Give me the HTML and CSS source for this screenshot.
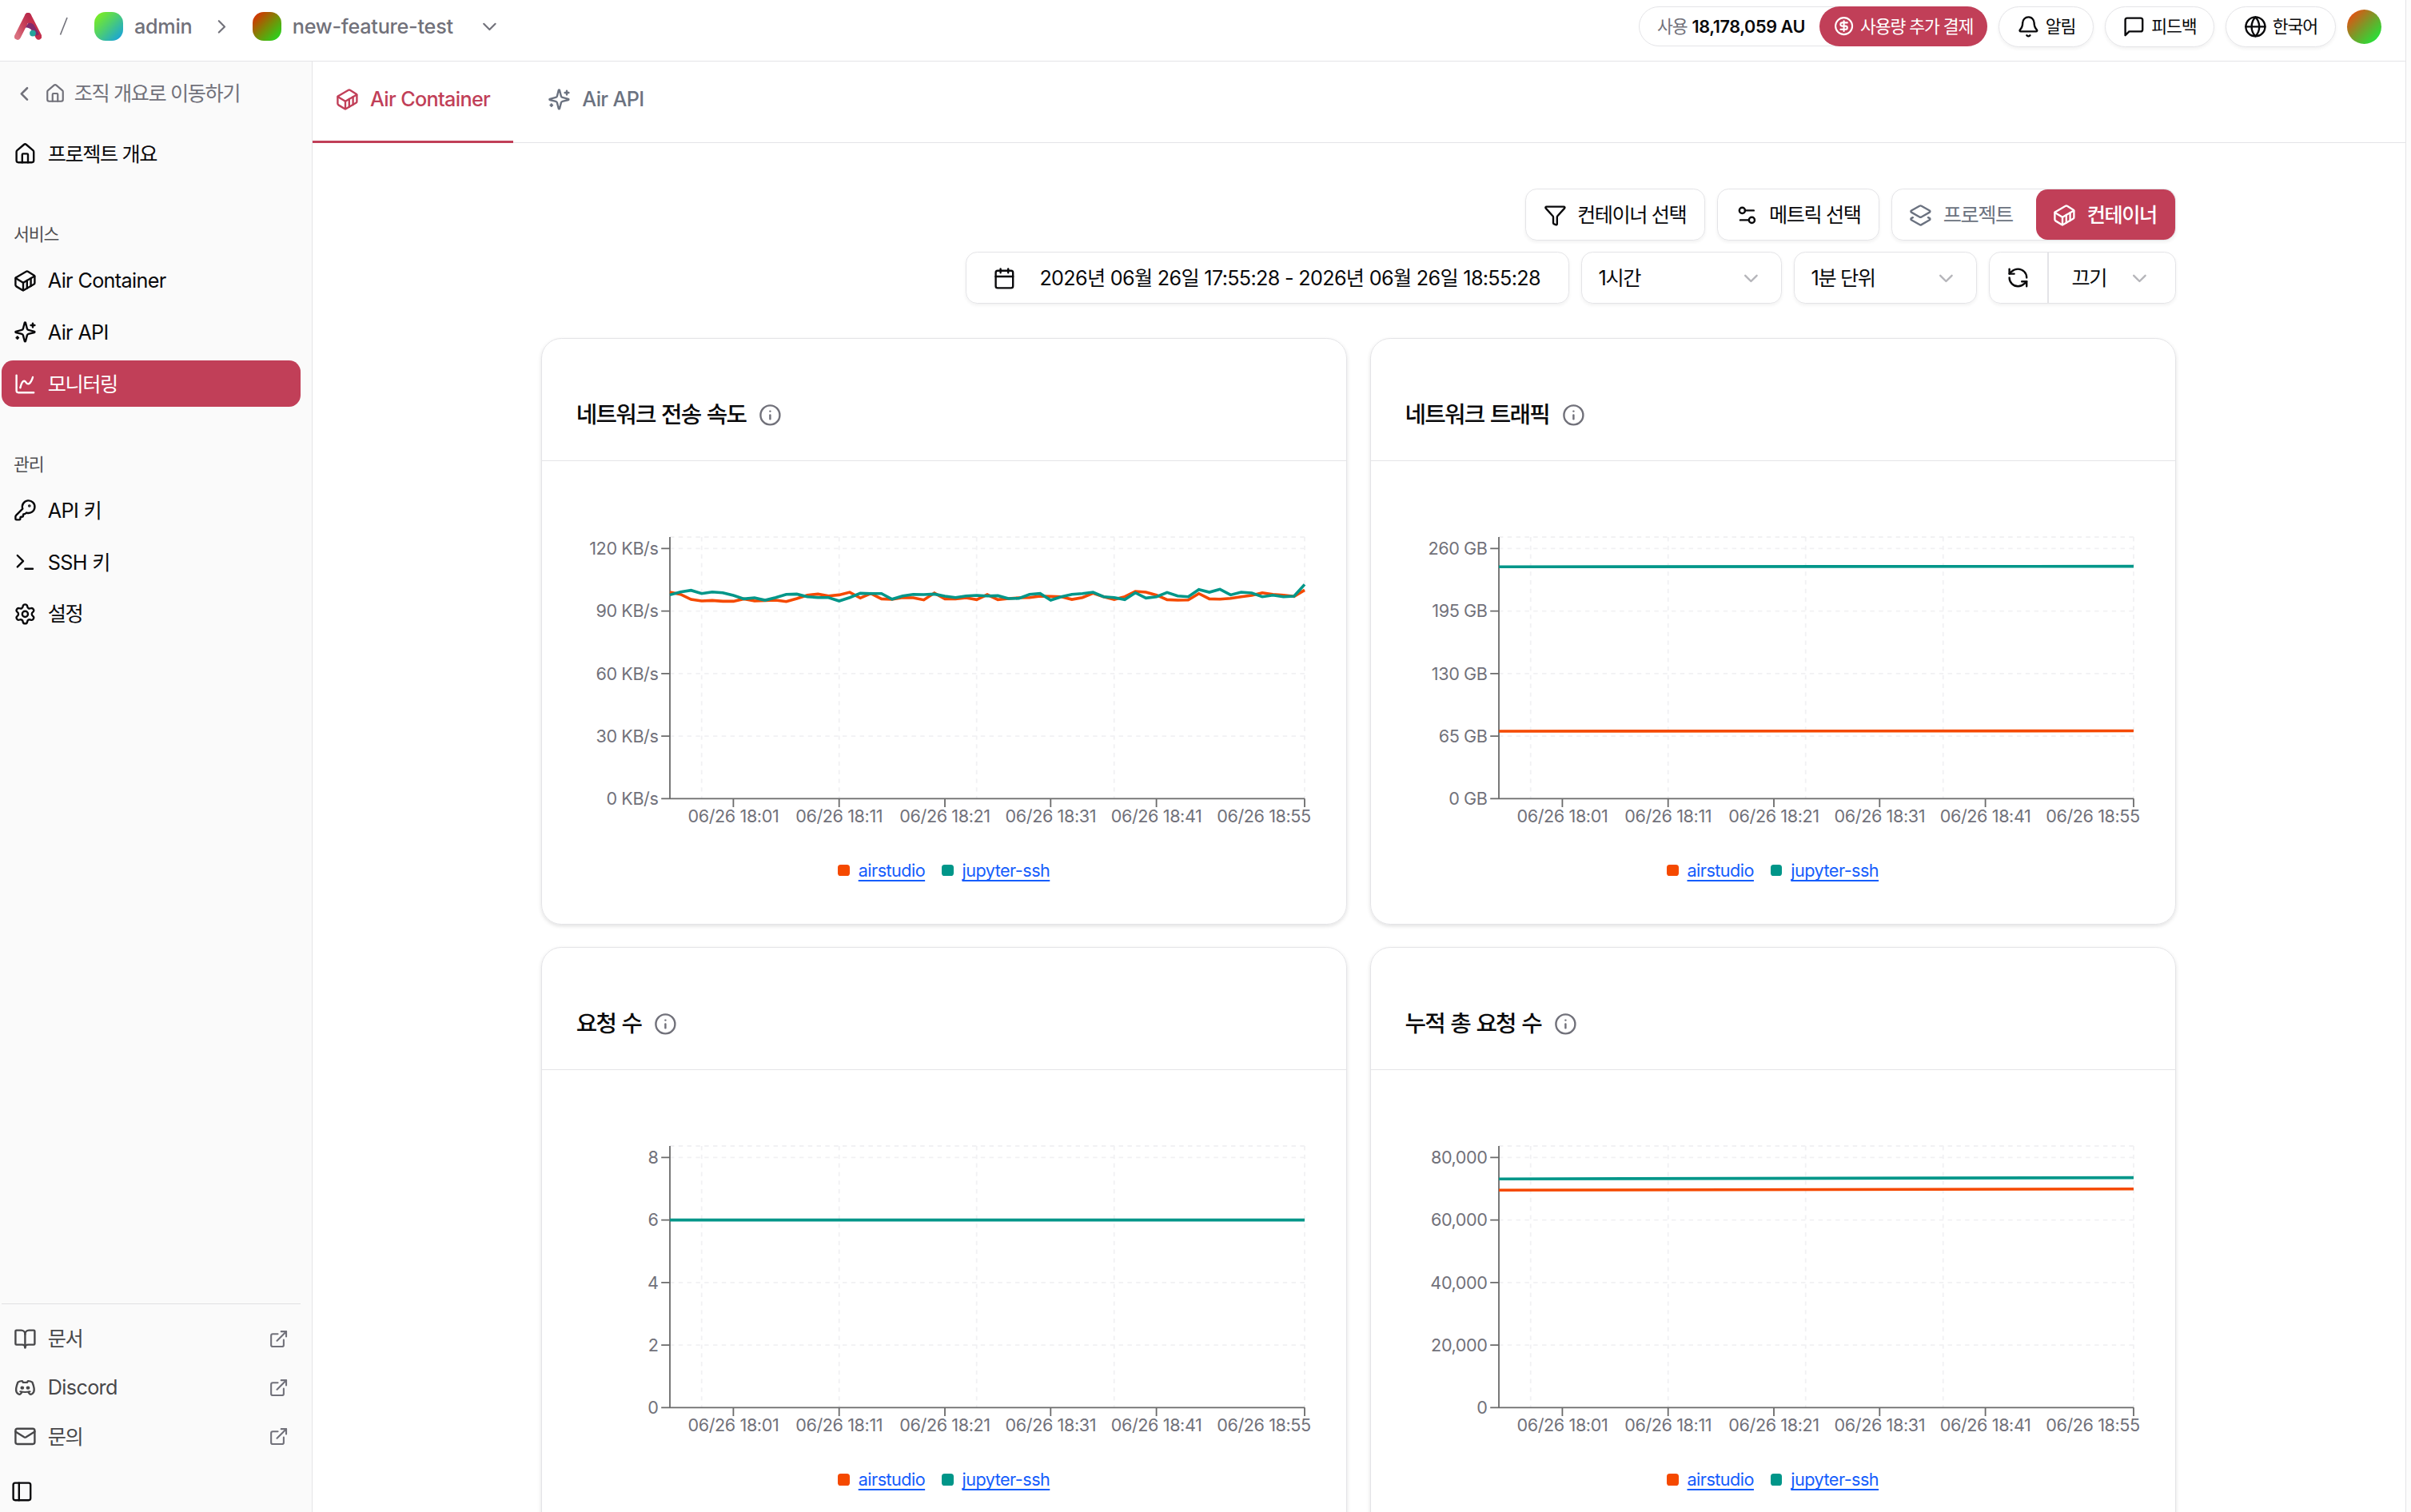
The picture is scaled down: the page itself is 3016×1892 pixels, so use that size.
FILE: index.html
```html
<!DOCTYPE html>
<html lang="ko">
<head>
<meta charset="utf-8">
<title>모니터링</title>
<link rel="stylesheet" href="styles.css">
</head>
<body>
<svg class="sprite" aria-hidden="true">
  <symbol id="home" viewBox="0 0 24 24"><path d="M15 21v-8a1 1 0 0 0-1-1h-4a1 1 0 0 0-1 1v8"/><path d="M3 10a2 2 0 0 1 .709-1.528l7-5.999a2 2 0 0 1 2.582 0l7 5.999A2 2 0 0 1 21 10v9a2 2 0 0 1-2 2H5a2 2 0 0 1-2-2z"/></symbol>
  <symbol id="container" viewBox="0 0 24 24"><path d="M22 7.7c0-.6-.4-1.2-.8-1.5l-6.3-3.9a1.72 1.72 0 0 0-1.7 0l-10.3 6c-.5.2-.9.8-.9 1.4v6.6c0 .5.4 1.2.8 1.5l6.3 3.9a1.72 1.72 0 0 0 1.7 0l10.3-6c.5-.3.9-1 .9-1.5Z"/><path d="M10 21.9V14L2.1 9.1"/><path d="m10 14 11.9-6.9"/><path d="M14 19.8v-8.1"/><path d="M18 17.5V9.4"/></symbol>
  <symbol id="sparkles" viewBox="0 0 24 24"><path d="M9.937 15.5A2 2 0 0 0 8.5 14.063l-6.135-1.582a.5.5 0 0 1 0-.962L8.5 9.936A2 2 0 0 0 9.937 8.5l1.582-6.135a.5.5 0 0 1 .963 0L14.063 8.5A2 2 0 0 0 15.5 9.937l6.135 1.581a.5.5 0 0 1 0 .964L15.5 14.063a2 2 0 0 0-1.437 1.437l-1.582 6.135a.5.5 0 0 1-.963 0z"/><path d="M20 3v4M22 5h-4M4 17v2M5 18H3"/></symbol>
  <symbol id="spline" viewBox="0 0 24 24"><path d="M3 3v16a2 2 0 0 0 2 2h16"/><path d="M7 16c.5-2 1.5-7 4-7 2 0 2 3 4 3 2.5 0 4.5-5 5-7"/></symbol>
  <symbol id="key" viewBox="0 0 24 24"><path d="M2.586 17.414A2 2 0 0 0 2 18.828V21a1 1 0 0 0 1 1h3a1 1 0 0 0 1-1v-1a1 1 0 0 1 1-1h1a1 1 0 0 0 1-1v-1a1 1 0 0 1 1-1h.172a2 2 0 0 0 1.414-.586l.814-.814a6.5 6.5 0 1 0-4-4z"/><circle cx="16.5" cy="7.5" r=".5" fill="currentColor"/></symbol>
  <symbol id="terminal" viewBox="0 0 24 24"><path d="m4 17 6-6-6-6"/><path d="M12 19h8"/></symbol>
  <symbol id="gear" viewBox="0 0 24 24"><path d="M9.671 4.136a2.34 2.34 0 0 1 4.659 0 2.34 2.34 0 0 0 3.319 1.915 2.34 2.34 0 0 1 2.33 4.033 2.34 2.34 0 0 0 0 3.831 2.34 2.34 0 0 1-2.33 4.033 2.34 2.34 0 0 0-3.319 1.915 2.34 2.34 0 0 1-4.659 0 2.34 2.34 0 0 0-3.32-1.915 2.34 2.34 0 0 1-2.33-4.033 2.34 2.34 0 0 0 0-3.831A2.34 2.34 0 0 1 6.35 6.051a2.34 2.34 0 0 0 3.319-1.915"/><circle cx="12" cy="12" r="3"/></symbol>
  <symbol id="book" viewBox="0 0 24 24"><path d="M12 7v14"/><path d="M3 18a1 1 0 0 1-1-1V4a1 1 0 0 1 1-1h5a4 4 0 0 1 4 4 4 4 0 0 1 4-4h5a1 1 0 0 1 1 1v13a1 1 0 0 1-1 1h-6a3 3 0 0 0-3 3 3 3 0 0 0-3-3z"/></symbol>
  <symbol id="discord" viewBox="0 0 24 24"><g transform="translate(0 1.5) scale(1 .88)"><circle cx="9" cy="12.2" r="1"/><circle cx="15" cy="12.2" r="1"/><path d="M15.5 17c0 1 1.5 3 2 3c1.5 0 2.833-1.667 3.5-3c.667-1.667.5-5.833-1.5-11.5c-1.457-1.015-3-1.34-4.5-1.5l-.972 1.923a11.913 11.913 0 0 0-4.053 0l-.975-1.923c-1.5.16-3.043.485-4.5 1.5c-2 5.667-2.167 9.833-1.5 11.5c.667 1.333 2 3 3.5 3c.5 0 2-2 2-3"/><path d="M7 16.5c3.5 1 6.5 1 10 0"/></g></symbol>
  <symbol id="mail" viewBox="0 0 24 24"><rect x="2" y="4" width="20" height="16" rx="2"/><path d="m22 7-8.991 5.727a2 2 0 0 1-2.009 0L2 7"/></symbol>
  <symbol id="external" viewBox="0 0 24 24"><path d="M15 3h6v6"/><path d="M10 14 21 3"/><path d="M18 13v6a2 2 0 0 1-2 2H5a2 2 0 0 1-2-2V8a2 2 0 0 1 2-2h6"/></symbol>
  <symbol id="panel" viewBox="0 0 24 24"><rect x="3" y="3" width="18" height="18" rx="2"/><path d="M9 3v18"/></symbol>
  <symbol id="bell" viewBox="0 0 24 24"><path d="M10.268 21a2 2 0 0 0 3.464 0"/><path d="M3.262 15.326A1 1 0 0 0 4 17h16a1 1 0 0 0 .74-1.673C19.41 13.956 18 12.499 18 8A6 6 0 0 0 6 8c0 4.499-1.411 5.956-2.738 7.326"/></symbol>
  <symbol id="message" viewBox="0 0 24 24"><path d="M21 15a2 2 0 0 1-2 2H7l-4 4V5a2 2 0 0 1 2-2h14a2 2 0 0 1 2 2z"/></symbol>
  <symbol id="globe" viewBox="0 0 24 24"><circle cx="12" cy="12" r="10"/><path d="M12 2a14.5 14.5 0 0 0 0 20 14.5 14.5 0 0 0 0-20"/><path d="M2 12h20"/></symbol>
  <symbol id="dollar" viewBox="0 0 24 24"><circle cx="12" cy="12" r="10"/><path d="M16 8h-6a2 2 0 1 0 0 4h4a2 2 0 1 1 0 4H8"/><path d="M12 18V6"/></symbol>
  <symbol id="info" viewBox="0 0 24 24"><circle cx="12" cy="12" r="10"/><path d="M12 16v-4"/><path d="M12 8h.01"/></symbol>
  <symbol id="funnel" viewBox="0 0 24 24"><path d="M10 20a1 1 0 0 0 .553.895l2 1A1 1 0 0 0 14 21v-7a2 2 0 0 1 .517-1.341L21.74 4.67A1 1 0 0 0 21 3H3a1 1 0 0 0-.742 1.67l7.225 7.989A2 2 0 0 1 10 14z"/></symbol>
  <symbol id="sliders" viewBox="0 0 24 24"><path d="M14 17H5"/><path d="M19 7h-9"/><circle cx="17" cy="17" r="3"/><circle cx="7" cy="7" r="3"/></symbol>
  <symbol id="layers" viewBox="0 0 24 24"><path d="M13 13.74a2 2 0 0 1-2 0L2.5 8.87a1 1 0 0 1 0-1.74L11 2.26a2 2 0 0 1 2 0l8.5 4.87a1 1 0 0 1 0 1.74z"/><path d="m20 14.285 1.5.845a1 1 0 0 1 0 1.74L13 21.74a2 2 0 0 1-2 0l-8.5-4.87a1 1 0 0 1 0-1.74l1.5-.845"/></symbol>
  <symbol id="calendar" viewBox="0 0 24 24"><path d="M8 2v4M16 2v4"/><rect x="3" y="4" width="18" height="18" rx="2"/><path d="M3 10h18"/></symbol>
  <symbol id="refresh" viewBox="0 0 24 24"><path d="M21 12a9 9 0 0 0-9-9 9.75 9.75 0 0 0-6.74 2.74L3 8"/><path d="M3 3v5h5"/><path d="M3 12a9 9 0 0 0 9 9 9.75 9.75 0 0 0 6.74-2.74L21 16"/><path d="M16 16h5v5"/></symbol>
  <symbol id="down" viewBox="0 0 24 24"><path d="m6 9 6 6 6-6"/></symbol>
  <symbol id="right" viewBox="0 0 24 24"><path d="m9 18 6-6-6-6"/></symbol>
  <symbol id="left" viewBox="0 0 24 24"><path d="m15 18-6-6 6-6"/></symbol>
  <!-- shared plot frame: dashed grid, axis lines, tick marks -->
  <symbol id="frame" viewBox="0 0 1006 470" overflow="visible">
    <g class="grid">
      <path d="M160 95h794M160 109.3h794M160 187.6h794M160 265.8h794M160 344.1h794"/>
      <path d="M199.7 95v327.3M371.7 95v327.3M543.7 95v327.3M715.7 95v327.3M954 95v327.3"/>
    </g>
    <path class="axis" d="M160 95v327.3M149.2 422.3H954M149.2 109.3h10.8M149.2 187.6h10.8M149.2 265.8h10.8M149.2 344.1h10.8M239.4 422.3v10.8M371.7 422.3v10.8M504 422.3v10.8M636.3 422.3v10.8M768.6 422.3v10.8M954 422.3v10.8"/>
  </symbol>
</svg>

<div class="app">
  <header class="topbar">
    <svg class="logo" viewBox="0 0 34 34">
      <defs><linearGradient id="lg" x1="0" y1="1" x2="1" y2="0"><stop offset="0" stop-color="#d9707f"/><stop offset=".55" stop-color="#c8415a"/><stop offset="1" stop-color="#b92c4d"/></linearGradient></defs>
      <path d="M17.2 4 30.3 29.6" stroke="#c42f4c" stroke-width="8" stroke-linecap="round"/>
      <path d="M14.5 17.2 17.6 12.8C21 12.2 24.5 14 25.8 17.5L31 27 27 29C24.5 22 20 18 14.5 17.2Z" fill="#812a6c"/>
      <path d="M4 29.8 17 4" stroke="url(#lg)" stroke-width="8" stroke-linecap="round"/>
      <path d="M13.8 18.4C17 11.5 23 12 25.2 17.5L27.5 23 23 24C21 20 18 18.4 13.8 18.4Z" fill="#812a6c"/>
      <circle cx="23" cy="25.6" r="3.9" fill="#25a39b"/>
    </svg>
    <svg class="slash" viewBox="0 0 12 24"><path d="M1.5 22.5 10 1"/></svg>
    <span class="tile tile-org"></span>
    <span class="crumb crumb-org">admin</span>
    <svg class="icon crumb-right"><use href="#right"/></svg>
    <span class="tile tile-project"></span>
    <span class="crumb crumb-project">new-feature-test</span>
    <svg class="icon crumb-down"><use href="#down"/></svg>
    <div class="actions">
      <div class="usage">
        <span class="usage-label ko">사용</span><b>18,178,059 AU</b>
        <button class="pay ko"><svg class="icon"><use href="#dollar"/></svg>사용량 추가 결제</button>
      </div>
      <button class="pill ko pill-bell"><svg class="icon"><use href="#bell"/></svg>알림</button>
      <button class="pill ko pill-message"><svg class="icon"><use href="#message"/></svg>피드백</button>
      <button class="pill ko pill-globe"><svg class="icon"><use href="#globe"/></svg>한국어</button>
      <span class="avatar"></span>
    </div>
  </header>

  <div class="shell">
    <aside class="sidebar">
      <a class="back ko"><svg class="icon back-arrow"><use href="#left"/></svg><svg class="icon back-home"><use href="#home"/></svg>조직 개요로 이동하기</a>
      <nav class="group">
        <a class="item ko"><svg class="icon"><use href="#home"/></svg>프로젝트 개요</a>
      </nav>
      <nav class="group">
        <h2 class="label ko">서비스</h2>
        <a class="item"><svg class="icon"><use href="#container"/></svg>Air Container</a>
        <a class="item"><svg class="icon"><use href="#sparkles"/></svg>Air API</a>
        <a class="item ko active"><svg class="icon"><use href="#spline"/></svg>모니터링</a>
      </nav>
      <nav class="group">
        <h2 class="label ko">관리</h2>
        <a class="item"><svg class="icon"><use href="#key"/></svg>API 키</a>
        <a class="item"><svg class="icon"><use href="#terminal"/></svg>SSH 키</a>
        <a class="item ko"><svg class="icon"><use href="#gear"/></svg>설정</a>
      </nav>
      <div class="links">
        <a class="link ko"><svg class="icon"><use href="#book"/></svg>문서<svg class="icon ext"><use href="#external"/></svg></a>
        <a class="link"><svg class="icon"><use href="#discord"/></svg>Discord<svg class="icon ext"><use href="#external"/></svg></a>
        <a class="link ko"><svg class="icon"><use href="#mail"/></svg>문의<svg class="icon ext"><use href="#external"/></svg></a>
      </div>
      <svg class="icon collapse"><use href="#panel"/></svg>
    </aside>

    <main class="main">
      <div class="tabs">
        <a class="tab active"><svg class="icon"><use href="#container"/></svg>Air Container</a>
        <a class="tab"><svg class="icon"><use href="#sparkles"/></svg>Air API</a>
      </div>
      <div class="content">
        <div class="toolbar">
          <button class="btn ko w-container"><svg class="icon"><use href="#funnel"/></svg>컨테이너 선택</button>
          <button class="btn ko w-metric"><svg class="icon"><use href="#sliders"/></svg>메트릭 선택</button>
          <div class="segment">
            <button class="seg ko"><svg class="icon"><use href="#layers"/></svg>프로젝트</button>
            <button class="seg ko on"><svg class="icon"><use href="#container"/></svg>컨테이너</button>
          </div>
        </div>
        <div class="toolbar">
          <button class="btn range"><svg class="icon"><use href="#calendar"/></svg>2026년 06월 26일 17:55:28 - 2026년 06월 26일 18:55:28</button>
          <button class="btn select w-hour ko">1시간<svg class="icon"><use href="#down"/></svg></button>
          <button class="btn select w-unit ko">1분 단위<svg class="icon"><use href="#down"/></svg></button>
          <div class="auto">
            <button class="reload"><svg class="icon"><use href="#refresh"/></svg></button>
            <button class="off ko">끄기<svg class="icon"><use href="#down"/></svg></button>
          </div>
        </div>

        <div class="cards">
          <section class="card">
            <h3 class="title">네트워크 전송 속도<svg class="icon"><use href="#info"/></svg></h3>
            <svg class="plot" viewBox="0 0 1006 470">
              <use href="#frame"/>
              <g class="time"><text x="239.4" y="452">06/26 18:01</text><text x="371.7" y="452">06/26 18:11</text><text x="504" y="452">06/26 18:21</text><text x="636.3" y="452">06/26 18:31</text><text x="768.6" y="452">06/26 18:41</text><text x="903" y="452">06/26 18:55</text></g>
              <g class="value"><text x="145.5" y="117">120 KB/s</text><text x="145.5" y="195.3">90 KB/s</text><text x="145.5" y="273.5">60 KB/s</text><text x="145.5" y="351.8">30 KB/s</text><text x="145.5" y="430">0 KB/s</text></g>
              <g transform="translate(160 422.3) scale(13.233 -2.609)">
                <path class="line airstudio" d="M0 98.98L1 97.96 2 95.54 3 94.77 4 95.03 5 94.64 6 94.64 7 95.79 8 94.77 9 95.03 10 95.15 11 94.52 12 95.92 13 97.58 14 98.09 15 97.2 16 97.71 17 98.98 18 96.18 19 98.35 20 95.79 21 95.54 22 96.43 23 96.3 24 95.28 25 98.6 26 95.79 27 95.79 28 96.3 29 95.41 30 97.84 31 95.41 32 95.92 33 96.3 34 96.43 35 97.07 36 96.94 37 96.81 38 95.54 39 96.43 40 98.47 41 96.81 42 95.54 43 96.81 44 99.37 45 98.98 46 97.58 47 95.41 48 95.15 49 95.28 50 98.35 51 95.79 52 95.66 53 96.05 54 96.81 55 97.45 56 98.73 57 97.96 58 97.58 59 96.94 60 100"/>
                <path class="line jupyter" d="M0 97.71L1 99.11 2 99.88 3 98.35 4 99.11 5 98.73 6 97.45 7 95.79 8 96.3 9 95.15 10 96.43 11 97.96 12 98.09 13 96.81 14 96.43 15 96.43 16 94.77 17 96.43 18 98.47 19 98.35 20 98.35 21 95.66 22 97.2 23 97.96 24 97.84 25 98.09 26 97.07 27 96.43 28 97.2 29 97.45 30 97.2 31 97.32 32 95.92 33 96.05 34 97.96 35 98.35 36 95.15 37 96.81 38 97.96 39 98.35 40 98.98 41 96.81 42 96.43 43 95.41 44 98.73 45 96.18 46 96.81 47 98.86 48 97.2 49 96.81 50 100.26 51 98.98 52 100.39 53 97.71 54 98.98 55 98.6 56 96.81 57 97.58 58 96.81 59 97.07 60 102.69"/>
              </g>
            </svg>
            <div class="legend"><i class="dot airstudio"></i><a>airstudio</a><i class="dot jupyter"></i><a>jupyter-ssh</a></div>
          </section>
          <section class="card">
            <h3 class="title">네트워크 트래픽<svg class="icon"><use href="#info"/></svg></h3>
            <svg class="plot" viewBox="0 0 1006 470">
              <use href="#frame"/>
              <g class="time"><text x="239.4" y="452">06/26 18:01</text><text x="371.7" y="452">06/26 18:11</text><text x="504" y="452">06/26 18:21</text><text x="636.3" y="452">06/26 18:31</text><text x="768.6" y="452">06/26 18:41</text><text x="903" y="452">06/26 18:55</text></g>
              <g class="value"><text x="145.5" y="117">260 GB</text><text x="145.5" y="195.3">195 GB</text><text x="145.5" y="273.5">130 GB</text><text x="145.5" y="351.8">65 GB</text><text x="145.5" y="430">0 GB</text></g>
              <path class="line airstudio" d="M160 338 954 337.5"/>
              <path class="line jupyter" d="M160 132.2 954 131.6"/>
            </svg>
            <div class="legend"><i class="dot airstudio"></i><a>airstudio</a><i class="dot jupyter"></i><a>jupyter-ssh</a></div>
          </section>
          <section class="card">
            <h3 class="title">요청 수<svg class="icon"><use href="#info"/></svg></h3>
            <svg class="plot" viewBox="0 0 1006 470">
              <use href="#frame"/>
              <g class="time"><text x="239.4" y="452">06/26 18:01</text><text x="371.7" y="452">06/26 18:11</text><text x="504" y="452">06/26 18:21</text><text x="636.3" y="452">06/26 18:31</text><text x="768.6" y="452">06/26 18:41</text><text x="903" y="452">06/26 18:55</text></g>
              <g class="value"><text x="145.5" y="117">8</text><text x="145.5" y="195.3">6</text><text x="145.5" y="273.5">4</text><text x="145.5" y="351.8">2</text><text x="145.5" y="430">0</text></g>
              <path class="line jupyter" d="M160 187.6H954"/>
            </svg>
            <div class="legend"><i class="dot airstudio"></i><a>airstudio</a><i class="dot jupyter"></i><a>jupyter-ssh</a></div>
          </section>
          <section class="card">
            <h3 class="title">누적 총 요청 수<svg class="icon"><use href="#info"/></svg></h3>
            <svg class="plot" viewBox="0 0 1006 470">
              <use href="#frame"/>
              <g class="time"><text x="239.4" y="452">06/26 18:01</text><text x="371.7" y="452">06/26 18:11</text><text x="504" y="452">06/26 18:21</text><text x="636.3" y="452">06/26 18:31</text><text x="768.6" y="452">06/26 18:41</text><text x="903" y="452">06/26 18:55</text></g>
              <g class="value"><text x="145.5" y="117">80,000</text><text x="145.5" y="195.3">60,000</text><text x="145.5" y="273.5">40,000</text><text x="145.5" y="351.8">20,000</text><text x="145.5" y="430">0</text></g>
              <path class="line airstudio" d="M160 150.3 954 148.7"/>
              <path class="line jupyter" d="M160 136.2 954 134.6"/>
            </svg>
            <div class="legend"><i class="dot airstudio"></i><a>airstudio</a><i class="dot jupyter"></i><a>jupyter-ssh</a></div>
          </section>
        </div>
      </div>
    </main>
  </div>
</div>
</body>
</html>
```
FILE: styles.css
```css
* { box-sizing: border-box; margin: 0; padding: 0; }
html, body { height: 1892px; overflow: hidden; }
body {
  background: #fcfcfc;
  color: #09090b;
  font: 400 25.2px/36px Inter, "Noto Sans CJK KR", sans-serif;
  letter-spacing: -.65px;
}
button { font: inherit; letter-spacing: inherit; color: inherit; background: none; border: 0; white-space: nowrap; }
.ko { letter-spacing: -1.4px; }
.sprite { display: block; width: 0; height: 0; overflow: hidden; }
.icon {
  width: 28.8px; height: 28.8px; flex: none;
  fill: none; stroke: currentColor; stroke-width: 2; stroke-linecap: round; stroke-linejoin: round;
}
.app {
  width: 3010px; height: 1892px;
  display: flex; flex-direction: column;
  background: #fff; border-right: 1px solid #e5e5e8;
}

/* top bar */
.topbar {
  flex: none; height: 77px; padding: 0 30px 10px 18px;
  display: flex; align-items: center;
  border-bottom: 1px solid #e4e4e7; color: #71717a;
}
.logo { width: 34px; height: 34px; fill: none; margin-right: 22px; }
.slash { width: 12px; height: 24px; margin-right: 32px; fill: none; stroke: #71717a; stroke-width: 1.6; }
.tile { width: 36px; height: 36px; border-radius: 14px; }
.tile-org { background: linear-gradient(135deg, #80f01a 5%, #4fd06c 45%, #16a0e0 95%); }
.tile-project { background: linear-gradient(135deg, #e02800 5%, #7b8a06 50%, #1fdc1f 95%); }
.crumb { font-weight: 500; margin-left: 14px; white-space: nowrap; letter-spacing: -.25px; }
.crumb-org { width: 91px; }
.crumb-right { margin: 0 24px 0 4px; }
.crumb-project { width: 220px; }
.crumb-down { margin-left: 12px; }
.crumb-right, .crumb-down { stroke-width: 1.8; }
.actions { margin-left: auto; display: flex; align-items: center; gap: 14px; font-size: 21.6px; color: #09090b; }
.actions .ko { letter-spacing: -1.1px; }
.usage {
  width: 436px; height: 50px; padding-left: 22px; display: flex; align-items: center;
  border: 1px solid #e4e4e7; border-radius: 25px; white-space: nowrap;
}
.usage-label { color: #71717a; margin-right: 6px; }
.usage b { font-weight: 600; letter-spacing: -.4px; }
.pay {
  width: 210px; height: 50px; margin: 0 -1px 0 auto; border-radius: 25px;
  background: #c13f58; color: #fff;
  display: flex; align-items: center; justify-content: center; gap: 8px;
}
.pay .icon { width: 25.2px; height: 25.2px; }
.pill {
  height: 51px; border: 1px solid #e4e4e7; border-radius: 26px;
  display: flex; align-items: center; justify-content: center; gap: 7px;
  box-shadow: 0 2px 4px rgba(0, 0, 0, .06);
}
.pill-bell { width: 119px; }
.pill-message { width: 137px; }
.pill-globe { width: 138px; }
.avatar { width: 43px; height: 43px; border-radius: 50%; background: linear-gradient(135deg, #ee4a10 8%, #7b9a28 48%, #15f03c 95%); }

/* sidebar */
.shell { flex: 1; min-height: 0; display: flex; }
.sidebar {
  flex: none; width: 391px; padding: 22px 14px 11px 2px;
  display: flex; flex-direction: column;
  background: #fafafa; border-right: 1px solid #e4e4e7;
}
.back { height: 36px; display: flex; align-items: center; padding-left: 14px; color: #71717a; }
.back-arrow { margin-right: 11px; stroke-width: 2.2; }
.back-home { width: 26px; height: 26px; margin-right: 11px; }
.group { display: flex; flex-direction: column; gap: 7.2px; margin-top: 54px; }
.back + .group { margin-top: 28.2px; }
.label { height: 36px; padding-left: 15px; margin-bottom: 3.5px; font-size: 21.6px; font-weight: 400; color: #505052; }
.label.ko { letter-spacing: -1.1px; }
.item { height: 57.6px; padding: 1.5px 0 0 15px; display: flex; align-items: center; gap: 14px; border-radius: 14.4px; white-space: nowrap; }
.item.active { background: #c13f58; color: #fff; }
.links { margin-top: auto; padding-top: 13px; border-top: 1px solid #e0e0e2; }
.link { height: 61.2px; padding: 0 15px; display: flex; align-items: center; gap: 14px; color: #48484a; }
.ext { width: 25.2px; height: 25.2px; margin-left: auto; color: #71717a; }
.collapse { margin: 24px 0 0 11px; }

/* tabs */
.main { flex: 1; min-width: 0; }
.tabs { height: 102px; display: flex; gap: 14.4px; border-bottom: 1px solid #e4e4e7; }
.tab { height: 102px; padding: 0 28.8px 8px; display: flex; align-items: center; gap: 14.4px; font-weight: 500; color: #6b7280; }
.tab.active { color: #c13f58; border-bottom: 3px solid #c13f58; padding-bottom: 5px; }

/* filters */
.content { width: 2046.4px; margin: 0 auto; padding: 57px 1.6px 0 0; }
.toolbar { display: flex; justify-content: flex-end; gap: 15px; margin-bottom: 14.4px; }
.btn, .segment, .auto {
  height: 64.8px; border: 1px solid #e4e4e7; border-radius: 14.4px;
  box-shadow: 0 2px 4px rgba(0, 0, 0, .06);
}
.btn { display: flex; align-items: center; padding: 1px 0 0 22px; gap: 13.5px; }
.w-container { width: 225px; }
.w-metric { width: 203px; }
.segment { width: 356px; display: flex; }
.seg { flex: 1; display: flex; align-items: center; padding: 1px 0 0 21px; gap: 14.4px; color: #6b7280; }
.seg.on { flex: none; width: 174px; border-radius: 14.4px; background: #c13f58; color: #fff; font-weight: 500; }
.range { width: 755px; padding-left: 33px; gap: 30px; letter-spacing: -.68px; }
.select { justify-content: space-between; padding: 1px 23px 0 21px; }
.w-hour { width: 251px; }
.w-unit { width: 229px; }
.select .icon, .off .icon { color: #b5b5ba; }
.auto { width: 234px; display: flex; }
.reload { width: 74px; display: flex; align-items: center; justify-content: center; border-right: 2px solid #e4e4e7; }
.off { flex: 1; display: flex; align-items: center; justify-content: space-between; padding: 1px 30px 0 29px; }

/* chart cards */
.cards { display: grid; grid-template-columns: 1fr 1fr; gap: 28.8px; margin-top: 43.2px; }
.card {
  height: 733.5px; border: 1px solid #e4e4e7; border-radius: 25.2px;
  box-shadow: 0 2px 5px rgba(0, 0, 0, .12);
}
.title {
  height: 153px; padding: 38px 0 0 43px; display: flex; align-items: center; gap: 16px;
  border-bottom: 1px solid #e4e4e7; font-size: 28.8px; font-weight: 500; letter-spacing: -1.8px; word-spacing: 1.5px;
}
.title .icon { color: #71717a; }
.plot { display: block; width: 1006px; height: 470px; overflow: visible; fill: none; }
.grid { fill: none; stroke: #f1f1f3; stroke-width: 1.8; stroke-dasharray: 5.4 5.4; }
.axis { fill: none; stroke: #6b6b6b; stroke-width: 1.8; }
.time, .value { fill: #71717a; font-size: 21.6px; letter-spacing: -.4px; }
.time { text-anchor: middle; }
.value { text-anchor: end; }
.line { stroke-width: 3.6; vector-effect: non-scaling-stroke; }
.line.airstudio { stroke: #f54900; }
.line.jupyter { stroke: #009689; }
.legend { display: flex; justify-content: center; align-items: center; height: 36px; margin-top: 24px; font-size: 21.6px; letter-spacing: -.52px; }
.legend a { color: #155dfc; text-decoration: underline; text-underline-offset: 4px; text-decoration-thickness: 1.8px; }
.dot { width: 14.4px; height: 14.4px; border-radius: 3.6px; margin-right: 11px; }
.dot.jupyter { margin-left: 21px; }
.dot.airstudio { background: #f54900; }
.dot.jupyter { background: #009689; }
```
